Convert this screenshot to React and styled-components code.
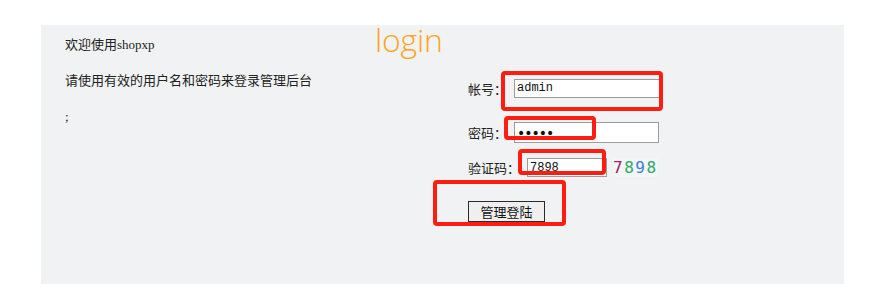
import React from "react";
import styled, {createGlobalStyle} from "styled-components";

const GlobalStyle = createGlobalStyle`
  html, body {
    margin: 0;
    padding: 0;
    background: #ffffff;
  }
  body {
    font-family: "Liberation Serif", "Noto Sans CJK SC", serif;
    color: #222;
  }
`;

const Page = styled.div`
  width: 882px;
  height: 297px;
  padding-top: 25px;
  box-sizing: border-box;
`;

const Panel = styled.div`
  margin-left: 41px;
  width: 803px;
  height: 259px;
  background: #f1f2f4;
  display: flex;
`;

const LeftCol = styled.div`
  flex: none;
  width: 310px;
  padding: 2px 0 0 24px;
`;

const Line = styled.div`
  height: 36px;
  line-height: 36px;
  font-size: 13px;
  white-space: nowrap;
`;

const RightCol = styled.div`
  display: flex;
  flex-direction: column;
`;

const Logo = styled.div`
  height: 36px;
  font-family: "Open Sans", "Liberation Sans", sans-serif;
  font-weight: 300;
  font-size: 32px;
  line-height: 30px;
  color: #ffa41c;
  letter-spacing: -0.2px;
`;

const Form = styled.div`
  position: relative;
  margin-left: 93px;
  margin-top: 17px;
  display: flex;
  flex-direction: column;
`;

const Row = styled.div`
  display: flex;
  align-items: center;
  gap: 7px;
  height: ${props => props.h || 20}px;
  margin-top: ${props => props.mt || 0}px;
`;

const Label = styled.span`
  font-family: "Noto Sans CJK SC", sans-serif;
  font-size: 13px;
  color: #222;
`;

const Input = styled.input`
  box-sizing: border-box;
  width: ${props => props.w}px;
  height: ${props => props.h || 20}px;
  border: 1px solid #9c9c9c;
  background: #fff;
  padding: 0 2px;
  font-family: ${props => props.type === "password"
          ? `"DejaVu Sans", sans-serif`
          : `"Liberation Mono", "Noto Sans CJK SC", monospace`};
  font-size: ${props => props.fs || 12}px;
  letter-spacing: ${props => props.type === "password" ? "-1px" : "0"};
  color: #111;
  outline: none;
`;

const Captcha = styled.span`
  margin-left: -1px;
  font-family: "DejaVu Sans Mono", monospace;
  font-size: 16px;
  letter-spacing: 1.5px;
  background: #f4f5f6;
`;

const Digit = styled.span`
  color: ${props => props.color};
`;

const Button = styled.button`
  box-sizing: border-box;
  width: 77px;
  height: 21px;
  border: 1px solid #2a2a2a;
  background: #efefef;
  font-family: "Noto Sans CJK SC", sans-serif;
  font-size: 13px;
  color: #111;
  padding: 0;
  line-height: 19px;
`;

const Mark = styled.div`
  position: absolute;
  left: ${props => props.x}px;
  top: ${props => props.y}px;
  width: ${props => props.w}px;
  height: ${props => props.h}px;
  box-sizing: border-box;
  border: 4px solid #ff1d12;
  border-radius: 4px;
  pointer-events: none;
`;

const digits = [
    {d: "7", color: "#a3206e"},
    {d: "8", color: "#2fa865"},
    {d: "9", color: "#3a7fe0"},
    {d: "8", color: "#2fa865"},
];

const App = () => {
    return (
        <Page>
            <GlobalStyle/>
            <Panel>
                <LeftCol>
                    <Line>欢迎使用shopxp</Line>
                    <Line>请使用有效的用户名和密码来登录管理后台</Line>
                    <Line>;</Line>
                </LeftCol>
                <RightCol>
                    <Logo>login</Logo>
                    <Form>
                        <Row>
                            <Label>帐号：</Label>
                            <Input w={148} h={19} value="admin" readOnly/>
                        </Row>
                        <Row mt={24} h={21}>
                            <Label>密码：</Label>
                            <Input w={145} h={21} fs={14} type="password" value="12345" readOnly/>
                        </Row>
                        <Row mt={15} h={19}>
                            <Label>验证码：</Label>
                            <Input w={80} h={19} value="7898" readOnly/>
                            <Captcha>
                                {digits.map((item, i) =>
                                    <Digit key={i} color={item.color}>{item.d}</Digit>
                                )}
                            </Captcha>
                        </Row>
                        <Row mt={24} h={21}>
                            <Button>管理登陆</Button>
                        </Row>
                        <Mark x={33} y={-7} w={162} h={40}/>
                        <Mark x={36} y={38} w={92} h={24}/>
                        <Mark x={50} y={71} w={88} h={26}/>
                        <Mark x={-35} y={102} w={133} h={46}/>
                    </Form>
                </RightCol>
            </Panel>
        </Page>
    )
}

export default App
